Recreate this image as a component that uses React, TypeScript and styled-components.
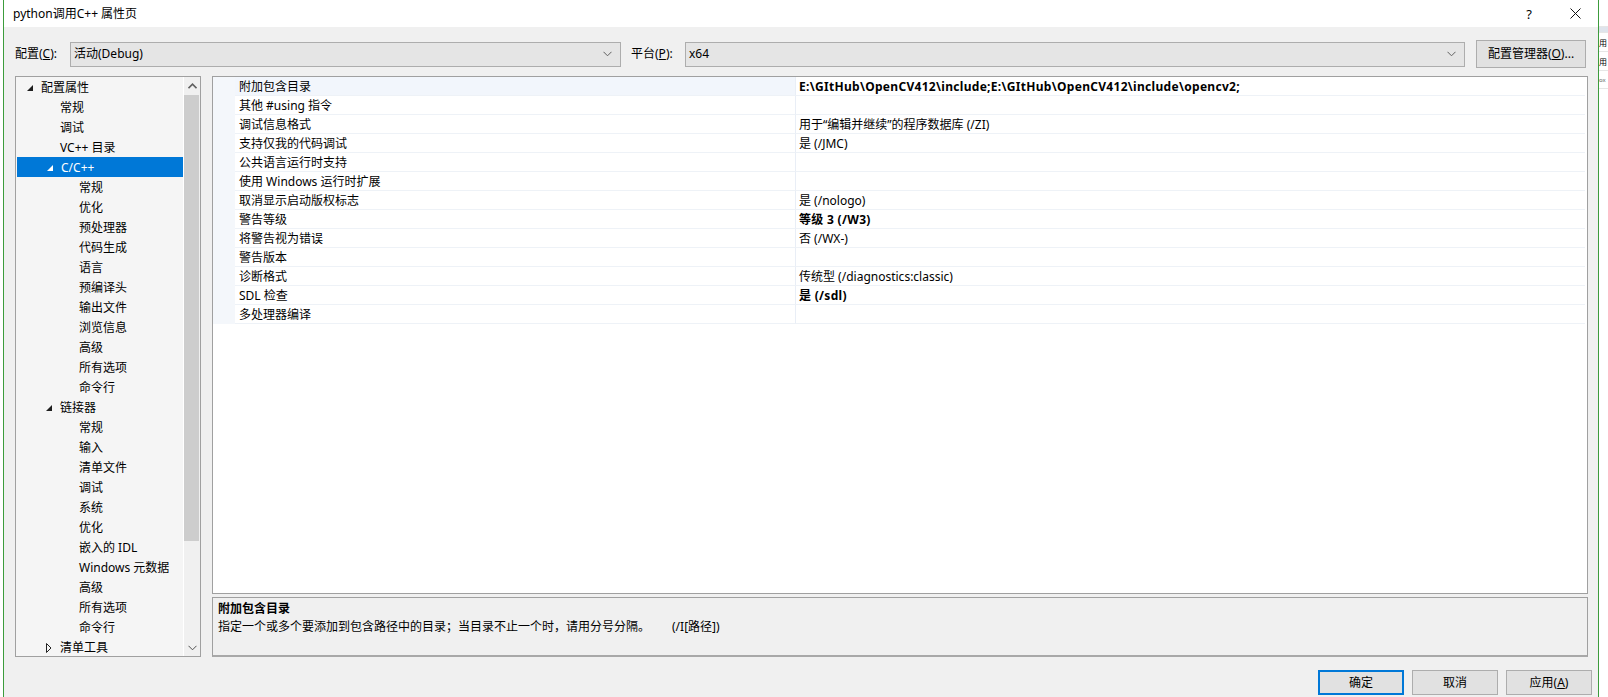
import React from 'react';
import styled, { createGlobalStyle } from 'styled-components';

const GlobalStyle = createGlobalStyle`
  html, body {
    margin: 0;
    padding: 0;
    background: #ffffff;
  }
  body {
    font-family: 'Noto Sans', 'Noto Sans CJK SC', sans-serif;
    font-size: 12px;
    color: #000000;
  }
  * {
    box-sizing: border-box;
  }
`;

const ACCENT = '#3c9c3c';
const BORDER = '#a0a0a0';

const Screen = styled.div`
  display: flex;
  width: 1608px;
  height: 697px;
  overflow: hidden;
  background: #ffffff;
`;

const EdgeStrip = styled.div<{ $w: number }>`
  width: ${(p) => p.$w}px;
  flex-shrink: 0;
  background: #ffffff;
  overflow: hidden;
`;

const PeekCell = styled.div<{ $h: number; $bg?: string; $color?: string; $size?: number }>`
  height: ${(p) => p.$h}px;
  line-height: ${(p) => p.$h}px;
  background: ${(p) => p.$bg || 'transparent'};
  color: ${(p) => p.$color || '#000'};
  white-space: nowrap;
  font-size: ${(p) => p.$size || 8}px;
  border-bottom: 1px solid #e6e6e6;
`;

const Dialog = styled.div`
  width: 1596px;
  flex-shrink: 0;
  border-left: 1px solid ${ACCENT};
  border-right: 1px solid ${ACCENT};
  display: flex;
  flex-direction: column;
  background: #f0f0f0;
`;

const TitleBar = styled.div`
  height: 27px;
  display: flex;
  align-items: center;
  background: #ffffff;
  padding-left: 9px;
`;

const TitleText = styled.div`
  flex: 1;
  font-size: 12px;
  line-height: 16px;
  color: #000;
`;

const CaptionButton = styled.div`
  width: 46px;
  height: 27px;
  display: flex;
  align-items: center;
  justify-content: center;
  color: #000;
  font-size: 13px;
`;

const Body = styled.div`
  flex: 1;
  display: flex;
  flex-direction: column;
  padding: 0 6px 0 11px;
`;

const ConfigBar = styled.div`
  margin-top: 13px;
  margin-right: 4px;
  height: 28px;
  display: flex;
  align-items: center;
`;

const FieldLabel = styled.div<{ $w: number }>`
  width: ${(p) => p.$w}px;
  flex-shrink: 0;
  line-height: 16px;
  white-space: nowrap;
`;

const Combo = styled.div<{ $w: number; $gap?: number }>`
  width: ${(p) => p.$w}px;
  flex-shrink: 0;
  height: 25px;
  margin-right: ${(p) => p.$gap || 0}px;
  background: #e5e5e5;
  border: 1px solid #adadad;
  display: flex;
  align-items: center;
  padding: 0 8px 0 3px;
`;

const ComboText = styled.div`
  flex: 1;
  line-height: 16px;
`;

const PushButton = styled.div<{ $w: number; $h: number; $default?: boolean }>`
  width: ${(p) => p.$w}px;
  height: ${(p) => p.$h}px;
  flex-shrink: 0;
  background: #e1e1e1;
  border: ${(p) => (p.$default ? '2px solid #0078d7' : '1px solid #adadad')};
  display: flex;
  align-items: center;
  justify-content: center;
  line-height: 16px;
  white-space: nowrap;
`;

const Main = styled.div`
  margin-top: 8px;
  margin-right: 4px;
  height: 581px;
  display: flex;
  gap: 11px;
`;

const Tree = styled.div`
  width: 186px;
  flex-shrink: 0;
  border: 1px solid ${BORDER};
  background: #f5f5f5;
  display: flex;
`;

const TreeList = styled.div`
  flex: 1;
  overflow: hidden;
`;

const TreeRow = styled.div<{ $level: number; $selected?: boolean }>`
  height: 20px;
  display: flex;
  align-items: center;
  padding-left: ${(p) => 11 + p.$level * 19}px;
  padding-top: 1px;
  margin-left: ${(p) => (p.$selected ? 1 : 0)}px;
  background: ${(p) => (p.$selected ? '#0078d7' : 'transparent')};
  color: ${(p) => (p.$selected ? '#ffffff' : '#000000')};
  line-height: 19px;
  white-space: nowrap;
`;

const Toggle = styled.span`
  width: 14px;
  flex-shrink: 0;
  display: flex;
  align-items: center;
`;

const ScrollBar = styled.div`
  width: 17px;
  flex-shrink: 0;
  background: #f0f0f0;
  border-left: 1px solid #ffffff;
  display: flex;
  flex-direction: column;
`;

const ScrollArrow = styled.div`
  height: 17px;
  display: flex;
  align-items: center;
  justify-content: center;
`;

const ScrollTrack = styled.div`
  flex: 1;
  padding-top: 1px;
`;

const ScrollThumb = styled.div`
  height: 446px;
  margin-right: 1px;
  background: #cdcdcd;
`;

const RightColumn = styled.div`
  flex: 1;
  display: flex;
  flex-direction: column;
  gap: 3px;
`;

const Grid = styled.div`
  height: 518px;
  border: 1px solid ${BORDER};
  background: #ffffff;
  padding-right: 2px;
`;

const GridRow = styled.div`
  display: grid;
  grid-template-columns: 22px 561px 1fr;
  height: 19px;
  line-height: 17px;
  white-space: nowrap;
`;

const Gutter = styled.div`
  background: #f4f7fb;
`;

const NameCell = styled.div<{ $selected?: boolean }>`
  padding: 1px 0 0 4px;
  background: ${(p) => (p.$selected ? '#f2f6fc' : '#ffffff')};
  border-bottom: 1px solid #eef2f7;
  border-right: 1px solid #e9eef6;
  overflow: hidden;
`;

const ValueCell = styled.div<{ $bold?: boolean }>`
  padding: 1px 0 0 3px;
  border-bottom: 1px solid #eef2f7;
  font-weight: ${(p) => (p.$bold ? 700 : 400)};
  letter-spacing: ${(p) => (p.$bold ? '0.3px' : '0')};
  overflow: hidden;
`;

const Description = styled.div`
  height: 60px;
  border: 1px solid ${BORDER};
  border-bottom: 2px solid #a8a8a8;
  background: #f0f0f0;
  padding: 2px 5px;
  line-height: 18px;
`;

const DescTitle = styled.div`
  font-weight: 700;
`;

const DescSwitch = styled.span`
  margin-left: 22px;
`;

const Footer = styled.div`
  margin-top: 13px;
  display: flex;
  justify-content: flex-end;
  gap: 8px;
`;

const Chevron = ({ dir, color = '#606060' }: { dir: 'up' | 'down'; color?: string }) => (
  <svg width="9" height="6" viewBox="0 0 9 6">
    <polyline
      points={dir === 'down' ? '0.5,0.8 4.5,4.8 8.5,0.8' : '0.5,5.2 4.5,1.2 8.5,5.2'}
      fill="none"
      stroke={color}
      strokeWidth={dir === 'up' ? 1.6 : 1}
    />
  </svg>
);

const Expanded = ({ color }: { color: string }) => (
  <svg width="6" height="6" viewBox="0 0 6 6">
    <polygon points="6,0 6,6 0,6" fill={color} />
  </svg>
);

const Collapsed = () => (
  <svg width="6" height="10" viewBox="0 0 6 10">
    <polygon points="0.5,0.5 5,5 0.5,9.5" fill="none" stroke="#222" />
  </svg>
);

type TreeItem = { label: string; level: number; toggle?: 'open' | 'closed'; selected?: boolean };

const treeItems: TreeItem[] = [
  { label: '配置属性', level: 0, toggle: 'open' },
  { label: '常规', level: 1 },
  { label: '调试', level: 1 },
  { label: 'VC++ 目录', level: 1 },
  { label: 'C/C++', level: 1, toggle: 'open', selected: true },
  { label: '常规', level: 2 },
  { label: '优化', level: 2 },
  { label: '预处理器', level: 2 },
  { label: '代码生成', level: 2 },
  { label: '语言', level: 2 },
  { label: '预编译头', level: 2 },
  { label: '输出文件', level: 2 },
  { label: '浏览信息', level: 2 },
  { label: '高级', level: 2 },
  { label: '所有选项', level: 2 },
  { label: '命令行', level: 2 },
  { label: '链接器', level: 1, toggle: 'open' },
  { label: '常规', level: 2 },
  { label: '输入', level: 2 },
  { label: '清单文件', level: 2 },
  { label: '调试', level: 2 },
  { label: '系统', level: 2 },
  { label: '优化', level: 2 },
  { label: '嵌入的 IDL', level: 2 },
  { label: 'Windows 元数据', level: 2 },
  { label: '高级', level: 2 },
  { label: '所有选项', level: 2 },
  { label: '命令行', level: 2 },
  { label: '清单工具', level: 1, toggle: 'closed' },
];

type Prop = { name: string; value?: string; bold?: boolean };

const properties: Prop[] = [
  {
    name: '附加包含目录',
    value: 'E:\\GItHub\\OpenCV412\\include;E:\\GItHub\\OpenCV412\\include\\opencv2;',
    bold: true,
  },
  { name: '其他 #using 指令' },
  { name: '调试信息格式', value: '用于“编辑并继续”的程序数据库 (/ZI)' },
  { name: '支持仅我的代码调试', value: '是 (/JMC)' },
  { name: '公共语言运行时支持' },
  { name: '使用 Windows 运行时扩展' },
  { name: '取消显示启动版权标志', value: '是 (/nologo)' },
  { name: '警告等级', value: '等级 3 (/W3)', bold: true },
  { name: '将警告视为错误', value: '否 (/WX-)' },
  { name: '警告版本' },
  { name: '诊断格式', value: '传统型 (/diagnostics:classic)' },
  { name: 'SDL 检查', value: '是 (/sdl)', bold: true },
  { name: '多处理器编译' },
];

export default function App() {
  return (
    <>
      <GlobalStyle />
      <Screen>
        <EdgeStrip $w={3} />
        <Dialog>
          <TitleBar>
            <TitleText>python调用C++ 属性页</TitleText>
            <CaptionButton>?</CaptionButton>
            <CaptionButton>
              <svg width="11" height="11" viewBox="0 0 11 11">
                <path d="M0.5 0.5 L10.5 10.5 M10.5 0.5 L0.5 10.5" stroke="#111" strokeWidth="1" />
              </svg>
            </CaptionButton>
          </TitleBar>
          <Body>
            <ConfigBar>
              <FieldLabel $w={55}>
                配置(<u>C</u>):
              </FieldLabel>
              <Combo $w={551} $gap={10}>
                <ComboText>活动(Debug)</ComboText>
                <Chevron dir="down" />
              </Combo>
              <FieldLabel $w={54}>
                平台(<u>P</u>):
              </FieldLabel>
              <Combo $w={780} $gap={11}>
                <ComboText>x64</ComboText>
                <Chevron dir="down" />
              </Combo>
              <PushButton $w={110} $h={28}>
                配置管理器(<u>O</u>)...
              </PushButton>
            </ConfigBar>

            <Main>
              <Tree>
                <TreeList>
                  {treeItems.map((item, i) => (
                    <TreeRow key={i} $level={item.level} $selected={item.selected}>
                      <Toggle>
                        {item.toggle === 'open' && (
                          <Expanded color={item.selected ? '#ffffff' : '#1e1e1e'} />
                        )}
                        {item.toggle === 'closed' && <Collapsed />}
                      </Toggle>
                      {item.label}
                    </TreeRow>
                  ))}
                </TreeList>
                <ScrollBar>
                  <ScrollArrow>
                    <Chevron dir="up" />
                  </ScrollArrow>
                  <ScrollTrack>
                    <ScrollThumb />
                  </ScrollTrack>
                  <ScrollArrow>
                    <Chevron dir="down" color="#505050" />
                  </ScrollArrow>
                </ScrollBar>
              </Tree>

              <RightColumn>
                <Grid>
                  {properties.map((p, i) => (
                    <GridRow key={i}>
                      <Gutter />
                      <NameCell $selected={i === 0}>{p.name}</NameCell>
                      <ValueCell $bold={p.bold}>{p.value || ''}</ValueCell>
                    </GridRow>
                  ))}
                </Grid>
                <Description>
                  <DescTitle>附加包含目录</DescTitle>
                  <div>
                    指定一个或多个要添加到包含路径中的目录；当目录不止一个时，请用分号分隔。
                    <DescSwitch>(/I[路径])</DescSwitch>
                  </div>
                </Description>
              </RightColumn>
            </Main>

            <Footer>
              <PushButton $w={86} $h={25} $default>
                确定
              </PushButton>
              <PushButton $w={86} $h={25}>
                取消
              </PushButton>
              <PushButton $w={86} $h={25}>
                应用(<u>A</u>)
              </PushButton>
            </Footer>
          </Body>
        </Dialog>
        <EdgeStrip $w={9}>
          <PeekCell $h={27} />
          <PeekCell $h={6} $bg="#dfe4ec" />
          <PeekCell $h={19}>用</PeekCell>
          <PeekCell $h={19}>用</PeekCell>
          <PeekCell $h={18} $color="#666" $size={6}>
            ox
          </PeekCell>
        </EdgeStrip>
      </Screen>
    </>
  );
}
